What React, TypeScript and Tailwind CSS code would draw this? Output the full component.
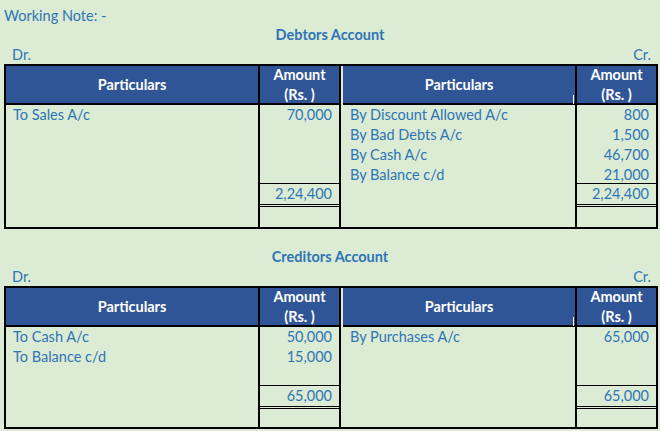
import React from 'react';

interface Entry {
  label: string;
  amount: string;
}

interface LedgerProps {
  title: string;
  debits: Entry[];
  credits: Entry[];
  total: string;
  rows: number;
  tail?: number;
}

const font = { fontFamily: 'Lato, "Open Sans", sans-serif' };

function HeaderCell({ children }: { children: React.ReactNode }) {
  return (
    <div className="h-[39px] bg-[#2f5597] border-b-2 border-black flex flex-col items-center justify-center text-white font-bold text-[14.5px] leading-[20px]">
      {children}
    </div>
  );
}

function ParticularsCol({ items, className = '' }: { items: Entry[]; className?: string }) {
  return (
    <div className={`relative flex flex-col ${className}`}>
      <HeaderCell>Particulars</HeaderCell>
      <div className="flex-1 flex flex-col">
        {items.map((it) => (
          <div key={it.label} className="h-[20px] leading-[20px] pl-[7px] text-[14.5px] text-[#2e75b6]">
            {it.label}
          </div>
        ))}
      </div>
    </div>
  );
}

function AmountCol({ items, rows, total, tail, className = '' }: { items: Entry[]; rows: number; total: string; tail: number; className?: string }) {
  return (
    <div className={`flex flex-col ${className}`}>
      <HeaderCell>
        <span>Amount</span>
        <span>(Rs. )</span>
      </HeaderCell>
      <div className="flex flex-col" style={{ height: rows * 20 - 2 }}>
        {items.map((it) => (
          <div key={it.label} className="h-[20px] leading-[20px] pr-[7px] text-right text-[14.5px] text-[#2e75b6]">
            {it.amount}
          </div>
        ))}
      </div>
      <div className="h-[21px] leading-[20px] border-t border-black pr-[7px] text-right text-[14.5px] text-[#2e75b6]">
        {total}
      </div>
      <div className="h-[3px] border-t border-b border-black" />
      <div style={{ height: tail }} />
    </div>
  );
}

function Ledger({ title, debits, credits, total, rows, tail = 20 }: LedgerProps) {
  return (
    <div>
      <div className="h-[20px] leading-[20px] text-center font-bold text-[14.5px] text-[#2e75b6]">{title}</div>
      <div className="h-[19px] flex items-end justify-between px-[8px] text-[14.5px] leading-[18px] text-[#2e75b6]">
        <span className="pl-[4px]">Dr.</span>
        <span className="pr-[1px]">Cr.</span>
      </div>
      <div className="ml-[4px] w-[654px] border-2 border-black flex">
        <ParticularsCol items={debits} className="w-[252px]" />
        <AmountCol items={debits} rows={rows} total={total} tail={tail} className="w-[81px] border-l-2 border-black" />
        <ParticularsCol items={credits} className="w-[236px] border-l-2 border-black pl-[2px]" />
        <div className="relative">
          <div className="absolute left-[-2px] top-[29px] w-[1px] h-[9px] bg-white" />
        </div>
        <AmountCol items={credits} rows={rows} total={total} tail={tail} className="w-[81px] border-l-2 border-black" />
      </div>
    </div>
  );
}

export default function App() {
  return (
    <div className="w-[660px] h-[431px] bg-[#dcebd3] overflow-hidden" style={font}>
      <div className="h-[25px] pt-[6px] leading-[20px] pl-[4px] text-[14.5px] text-[#2e75b6]">Working Note: -</div>
      <Ledger
        title="Debtors Account"
        rows={4}
        total="2,24,400"
        debits={[{ label: 'To Sales A/c', amount: '70,000' }]}
        credits={[
          { label: 'By Discount Allowed A/c', amount: '800' },
          { label: 'By Bad Debts A/c', amount: '1,500' },
          { label: 'By Cash A/c', amount: '46,700' },
          { label: 'By Balance c/d', amount: '21,000' },
        ]}
      />
      <div className="h-[18px]" />
      <Ledger
        title="Creditors Account"
        rows={3}
        total="65,000"
        tail={18}
        debits={[
          { label: 'To Cash A/c', amount: '50,000' },
          { label: 'To Balance c/d', amount: '15,000' },
        ]}
        credits={[{ label: 'By Purchases A/c', amount: '65,000' }]}
      />
    </div>
  );
}
